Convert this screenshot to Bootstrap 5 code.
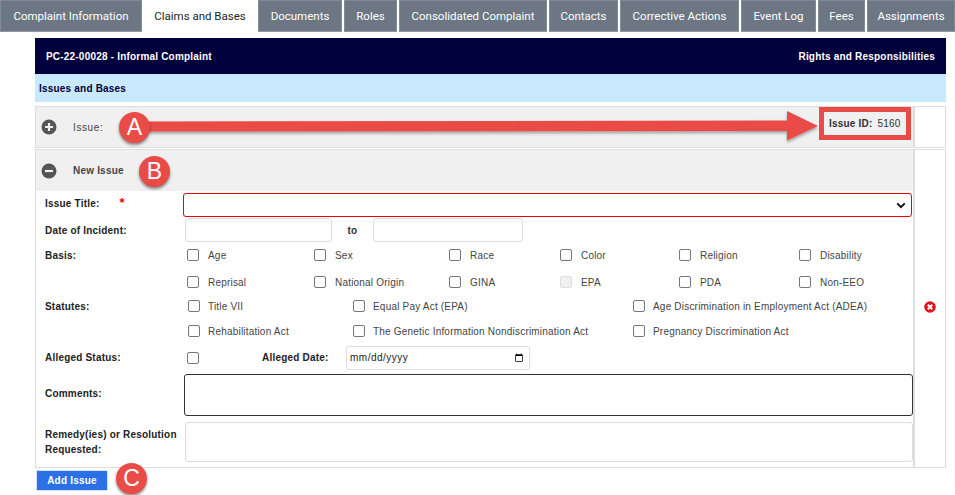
<!DOCTYPE html>
<html lang="en">
<head>
  <meta charset="UTF-8">
  <meta name="viewport" content="width=device-width, initial-scale=1.0">
  <title>Claims and Bases</title>
  <link rel="stylesheet" href="https://cdn.jsdelivr.net/npm/bootstrap@5.3.0/dist/css/bootstrap.min.css">
  <style>
    body {
      font-family: "Liberation Sans", Arial, sans-serif;
      font-size: 10px;
      letter-spacing: .2px;
      color: #333;
      background: #fff;
      height: 495px;
      overflow: hidden;
    }

    .tab-strip {
      height: 32px;
      gap: 2px;
      font-family: Roboto, sans-serif;
      font-size: 11.5px;
      letter-spacing: 0;
    }

    .tab-strip .tab-item {
      flex: 0 0 auto;
      line-height: 31px;
      text-align: center;
      color: #fff;
      background: #6c7783;
      border: 1px solid #7f8b97;
      border-bottom-color: #8f9aa5;
      text-decoration: none;
    }

    .tab-strip .tab-item.on {
      background: #fff;
      color: #212529;
      border-color: #fff;
    }

    .sheet { margin: 6px 9px 0 35px; }

    .head-navy {
      height: 36px;
      padding: 0 11px;
      background: #00003c;
      color: #fff;
      font-weight: 700;
    }

    .head-blue {
      height: 28px;
      padding: 0 4px;
      margin-bottom: 4px;
      background: #c9e9ff;
      color: #00003c;
      font-weight: 700;
    }

    .grid-row { border: 1px solid #ddd; }
    .grid-row + .grid-row { margin-top: 1px; }
    .grid-main { flex: 1 1 auto; min-width: 0; }
    .grid-side {
      flex: 0 0 32px;
      border-left: 2px solid #ddd;
    }

    .band {
      background: #f0f0f0;
      padding-left: 5px;
      font-weight: 700;
      color: #444;
    }
    .band svg { margin-right: 16px; }
    .band-top { height: 40px; font-weight: 400; letter-spacing: .6px; }
    .band-new { height: 41px; }

    .frm-row { padding-left: 9px; }
    .frm-label { flex: 0 0 138px; font-weight: 700; color: #222; }
    .lift-label { margin-top: -4px; }
    .req-star { color: #e00; font-size: 13px; margin-left: 20px; }

    .h-title { height: 28px; }
    .h-date { height: 22px; }
    .h-basis-a { height: 28px; }
    .h-basis-b { height: 26px; }
    .h-stat-a { height: 22px; }
    .h-stat-b { height: 28px; }
    .h-alleged { height: 25px; }
    .h-comments { height: 50px; }
    .h-remedy { height: 44px; margin-bottom: 3px; }

    .frm-row .form-control,
    .frm-row .form-select {
      font-size: 10px;
      border-radius: 3px;
      border-color: #ddd;
      padding: 0 3px;
      min-height: 0;
    }

    .sel-title {
      height: 24px;
      width: 729px;
      border-color: #e00 !important;
      background-image: url("data:image/svg+xml,%3csvg xmlns='http://www.w3.org/2000/svg' viewBox='0 0 12 8'%3e%3cpath fill='none' stroke='%23111' stroke-width='2.4' d='M1.500 1.500 6 6l4.500-4.500'/%3e%3c/svg%3e");
      background-size: 10px 7px;
      background-position: right 5px center;
    }

    .date-box { height: 24px; width: 147px; margin-left: 2px; }
    .date-to { width: 41px; text-align: center; font-weight: 700; }
    .date-box-2 { width: 150px; margin-left: 0; }

    .check-grid { display: grid; flex: 1 1 auto; margin-left: 4px; }
    .check-grid-basis { grid-template-columns: 127px 135px 111px 119px 120px 1fr; }
    .check-grid-stat { margin-left: 5px; grid-template-columns: 165px 280px 1fr; }
    .chk-wrap { display: flex; align-items: center; }
    .chk-wrap .form-check-input {
      width: 12px;
      height: 12px;
      margin: 0 9px 0 0;
      flex: none;
      border-color: #777;
      border-radius: 2px;
    }
    .check-grid-stat .chk-wrap .form-check-input { margin-right: 8px; }
    .chk-wrap .form-check-input:disabled { opacity: 1; background: #f0f0f0; border-color: #ddd; }
    .chk-wrap label { color: #444; }
    .chk-alleged { width: 75px; margin-left: 4px; }

    .alleged-date { width: 184px; height: 24px; color: #222; letter-spacing: .5px; }
    .alleged-label { width: 84px; font-weight: 700; color: #222; }
    .note-dark { height: 42px; width: 729px; margin-left: 1px; border: 1px solid #333 !important; resize: none; }
    .note-light { height: 40px; width: 728px; margin-left: 2px; resize: none; }
    .lbl-tall { line-height: 15px; }
    .del-icon { margin: 0 0 4px 0; }

    .btn-add {
      width: 72px;
      height: 21px;
      padding: 0;
      margin: 2px 0 0 1px;
      border-radius: 0;
      font-size: 10px;
      font-weight: 700;
      background: #2b70e4;
      border-color: #d5e3fa;
      letter-spacing: .2px;
    }

    .id-box {
      position: absolute;
      left: 819px;
      top: 107px;
      width: 92px;
      height: 33px;
      border: 5px solid #e94b47;
      background: #f0f0f0;
      padding-left: 5px;
      color: #333;
    }
    .id-box b { margin-right: 5px; }

    .mark-arrow { position: absolute; left: 0; top: 0; pointer-events: none; }
    .callout {
      position: absolute;
      width: 31px;
      height: 31px;
      border-radius: 50%;
      background: #e94b47;
      color: #fff;
      font-size: 23px;
      letter-spacing: 0;
      line-height: 31px;
      text-align: center;
      box-shadow: 0 2px 3px rgba(0, 0, 0, .45);
    }
    .call-a { left: 119px; top: 112px; }
    .call-b { left: 139px; top: 156px; }
    .call-c { left: 116px; top: 463px; }
  </style>
</head>
<body>
  <nav class="tab-strip d-flex overflow-hidden">
    <a class="tab-item" style="width:142px">Complaint Information</a>
    <a class="tab-item on" style="width:112px">Claims and Bases</a>
    <a class="tab-item" style="width:84px">Documents</a>
    <a class="tab-item" style="width:53px">Roles</a>
    <a class="tab-item" style="width:148px">Consolidated Complaint</a>
    <a class="tab-item" style="width:69px">Contacts</a>
    <a class="tab-item" style="width:119px">Corrective Actions</a>
    <a class="tab-item" style="width:75px">Event Log</a>
    <a class="tab-item" style="width:47px">Fees</a>
    <a class="tab-item" style="width:88px">Assignments</a>
  </nav>

  <div class="sheet">
    <div class="head-navy d-flex align-items-center justify-content-between">
      <span>PC-22-00028 - Informal Complaint</span>
      <span>Rights and Responsibilities</span>
    </div>
    <div class="head-blue d-flex align-items-center">Issues and Bases</div>

    <div class="grid-row d-flex">
      <div class="grid-main">
        <div class="band band-top d-flex align-items-center">
          <svg width="16" height="16" viewBox="0 0 16 16"><circle cx="8" cy="8" r="7.500" fill="#555"/><path d="M8 4v8M4 8h8" stroke="#f0f0f0" stroke-width="2.200"/></svg>
          <span>Issue:</span>
        </div>
      </div>
      <div class="grid-side"></div>
    </div>

    <div class="grid-row d-flex">
      <div class="grid-main">
        <div class="band band-new d-flex align-items-center">
          <svg width="16" height="16" viewBox="0 0 16 16"><circle cx="8" cy="8" r="7.500" fill="#555"/><path d="M4 8h8" stroke="#f0f0f0" stroke-width="2.200"/></svg>
          <span>New Issue</span>
        </div>

        <div class="frm-row h-title d-flex align-items-center">
          <div class="frm-label lift-label">Issue Title:<span class="req-star">*</span></div>
          <select class="form-select sel-title"><option></option></select>
        </div>

        <div class="frm-row h-date d-flex align-items-center">
          <div class="frm-label">Date of Incident:</div>
          <input class="form-control date-box" type="text">
          <div class="date-to">to</div>
          <input class="form-control date-box date-box-2" type="text">
        </div>

        <div class="frm-row h-basis-a d-flex align-items-center">
          <div class="frm-label">Basis:</div>
          <div class="check-grid check-grid-basis">
            <div class="chk-wrap"><input class="form-check-input" type="checkbox" id="b1"><label for="b1">Age</label></div>
            <div class="chk-wrap"><input class="form-check-input" type="checkbox" id="b2"><label for="b2">Sex</label></div>
            <div class="chk-wrap"><input class="form-check-input" type="checkbox" id="b3"><label for="b3">Race</label></div>
            <div class="chk-wrap"><input class="form-check-input" type="checkbox" id="b4"><label for="b4">Color</label></div>
            <div class="chk-wrap"><input class="form-check-input" type="checkbox" id="b5"><label for="b5">Religion</label></div>
            <div class="chk-wrap"><input class="form-check-input" type="checkbox" id="b6"><label for="b6">Disability</label></div>
          </div>
        </div>
        <div class="frm-row h-basis-b d-flex align-items-center">
          <div class="frm-label"></div>
          <div class="check-grid check-grid-basis">
            <div class="chk-wrap"><input class="form-check-input" type="checkbox" id="b7"><label for="b7">Reprisal</label></div>
            <div class="chk-wrap"><input class="form-check-input" type="checkbox" id="b8"><label for="b8">National Origin</label></div>
            <div class="chk-wrap"><input class="form-check-input" type="checkbox" id="b9"><label for="b9">GINA</label></div>
            <div class="chk-wrap"><input class="form-check-input" type="checkbox" id="b10" disabled><label for="b10">EPA</label></div>
            <div class="chk-wrap"><input class="form-check-input" type="checkbox" id="b11"><label for="b11">PDA</label></div>
            <div class="chk-wrap"><input class="form-check-input" type="checkbox" id="b12"><label for="b12">Non-EEO</label></div>
          </div>
        </div>

        <div class="frm-row h-stat-a d-flex align-items-center">
          <div class="frm-label">Statutes:</div>
          <div class="check-grid check-grid-stat">
            <div class="chk-wrap"><input class="form-check-input" type="checkbox" id="s1"><label for="s1">Title VII</label></div>
            <div class="chk-wrap"><input class="form-check-input" type="checkbox" id="s2"><label for="s2">Equal Pay Act (EPA)</label></div>
            <div class="chk-wrap"><input class="form-check-input" type="checkbox" id="s3"><label for="s3">Age Discrimination in Employment Act (ADEA)</label></div>
          </div>
        </div>
        <div class="frm-row h-stat-b d-flex align-items-center">
          <div class="frm-label"></div>
          <div class="check-grid check-grid-stat">
            <div class="chk-wrap"><input class="form-check-input" type="checkbox" id="s4"><label for="s4">Rehabilitation Act</label></div>
            <div class="chk-wrap"><input class="form-check-input" type="checkbox" id="s5"><label for="s5">The Genetic Information Nondiscrimination Act</label></div>
            <div class="chk-wrap"><input class="form-check-input" type="checkbox" id="s6"><label for="s6">Pregnancy Discrimination Act</label></div>
          </div>
        </div>

        <div class="frm-row h-alleged d-flex align-items-center">
          <div class="frm-label">Alleged Status:</div>
          <div class="chk-wrap chk-alleged"><input class="form-check-input" type="checkbox" id="a1"></div>
          <div class="alleged-label">Alleged Date:</div>
          <input class="form-control alleged-date" type="date">
        </div>

        <div class="frm-row h-comments d-flex align-items-center">
          <div class="frm-label lift-label">Comments:</div>
          <textarea class="form-control note-dark"></textarea>
        </div>

        <div class="frm-row h-remedy d-flex align-items-center">
          <div class="frm-label lbl-tall">Remedy(ies) or Resolution Requested:</div>
          <textarea class="form-control note-light"></textarea>
        </div>
      </div>
      <div class="grid-side d-flex align-items-center justify-content-center">
        <svg class="del-icon" width="12" height="12" viewBox="0 0 12 12"><circle cx="6" cy="6" r="5.800" fill="#e3111b"/><path d="M3.800 3.800l4.400 4.400M8.200 3.800l-4.400 4.400" stroke="#fff" stroke-width="2"/></svg>
      </div>
    </div>

    <button class="btn btn-primary btn-add" type="button">Add Issue</button>
  </div>

  <div class="id-box d-flex align-items-center"><b>Issue ID:</b><span>5160</span></div>
  <svg class="mark-arrow" width="955" height="495">
    <defs><filter id="soft"><feDropShadow dx="0" dy="2" stdDeviation="1.500" flood-opacity=".35"/></filter></defs>
    <path d="M148 121.500L787 120.500V111L818 126L787 140.500V131L148 131.500Z" fill="#e94b47" filter="url(#soft)"/>
  </svg>
  <div class="callout call-a">A</div>
  <div class="callout call-b">B</div>
  <div class="callout call-c">C</div>

  <script src="https://cdn.jsdelivr.net/npm/bootstrap@5.3.0/dist/js/bootstrap.bundle.min.js"></script>
</body>
</html>
